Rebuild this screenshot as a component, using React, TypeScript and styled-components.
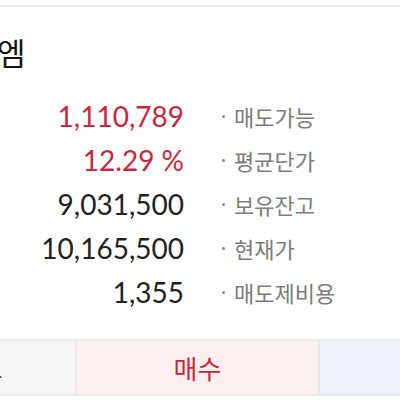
import styled, { createGlobalStyle } from 'styled-components';

const GlobalStyle = createGlobalStyle`
  html, body {
    margin: 0;
    padding: 0;
    background: #ffffff;
    overflow: hidden;
  }
  body {
    font-family: "Noto Sans CJK KR", "Noto Sans", sans-serif;
  }
`;

const Page = styled.div`
  width: 400px;
  height: 400px;
  padding-top: 5px;
  box-sizing: border-box;
  overflow: hidden;
`;

const Divider = styled.div`
  height: 2px;
  background-color: #ebebeb;
`;

const Title = styled.h1`
  margin: 25px 0 0 -3px;
  font-size: 31px;
  font-weight: 400;
  line-height: 40px;
  color: #111111;
  white-space: nowrap;
`;

const InfoList = styled.div`
  margin-top: 22px;
  display: grid;
  grid-template-columns: 184px 1fr;
  grid-auto-rows: 44px;
  column-gap: 38px;
  align-items: center;
`;

const Value = styled.div<{ $red?: boolean }>`
  text-align: right;
  font-family: Lato, "Liberation Sans", sans-serif;
  font-size: 28px;
  line-height: 44px;
  color: ${(p) => (p.$red ? '#c8283d' : '#222222')};
`;

const Label = styled.div`
  display: flex;
  align-items: center;
  font-size: 22px;
  line-height: 44px;
  color: #7c7c7c;
`;

const Dot = styled.span`
  width: 3px;
  height: 3px;
  border-radius: 50%;
  background-color: #8a8a8a;
  margin-right: 9px;
`;

const ButtonRow = styled.div`
  margin-top: 25px;
  margin-left: -166px;
  display: flex;
  gap: 2px;
  border-top: 2px solid #ebebeb;
  border-bottom: 2px solid #ebebeb;
  background-color: #e8e8e8;
`;

const OrderButton = styled.div<{ $bg: string; $color: string }>`
  flex: 0 0 241px;
  height: 53px;
  display: flex;
  align-items: center;
  justify-content: center;
  background-color: ${(p) => p.$bg};
  color: ${(p) => p.$color};
  font-size: 26px;
`;

const rows = [
  { value: '1,110,789', label: '매도가능', red: true },
  { value: '12.29 %', label: '평균단가', red: true },
  { value: '9,031,500', label: '보유잔고', red: false },
  { value: '10,165,500', label: '현재가', red: false },
  { value: '1,355', label: '매도제비용', red: false },
];

const App = () => {
  return (
    <>
      <GlobalStyle />
      <Page>
        <Divider />
        <Title>엠</Title>
        <InfoList>
          {rows.map((r) => (
            <>
              <Value key={r.label + 'v'} $red={r.red}>
                {r.value}
              </Value>
              <Label key={r.label}>
                <Dot />
                {r.label}
              </Label>
            </>
          ))}
        </InfoList>
        <ButtonRow>
          <OrderButton $bg="#f6f6f6" $color="#333333">
            정정취소
          </OrderButton>
          <OrderButton $bg="#fcefef" $color="#c8283d">
            매수
          </OrderButton>
          <OrderButton $bg="#eef1fb" $color="#2f5bd3">
            매도
          </OrderButton>
        </ButtonRow>
      </Page>
    </>
  );
};

export default App;
